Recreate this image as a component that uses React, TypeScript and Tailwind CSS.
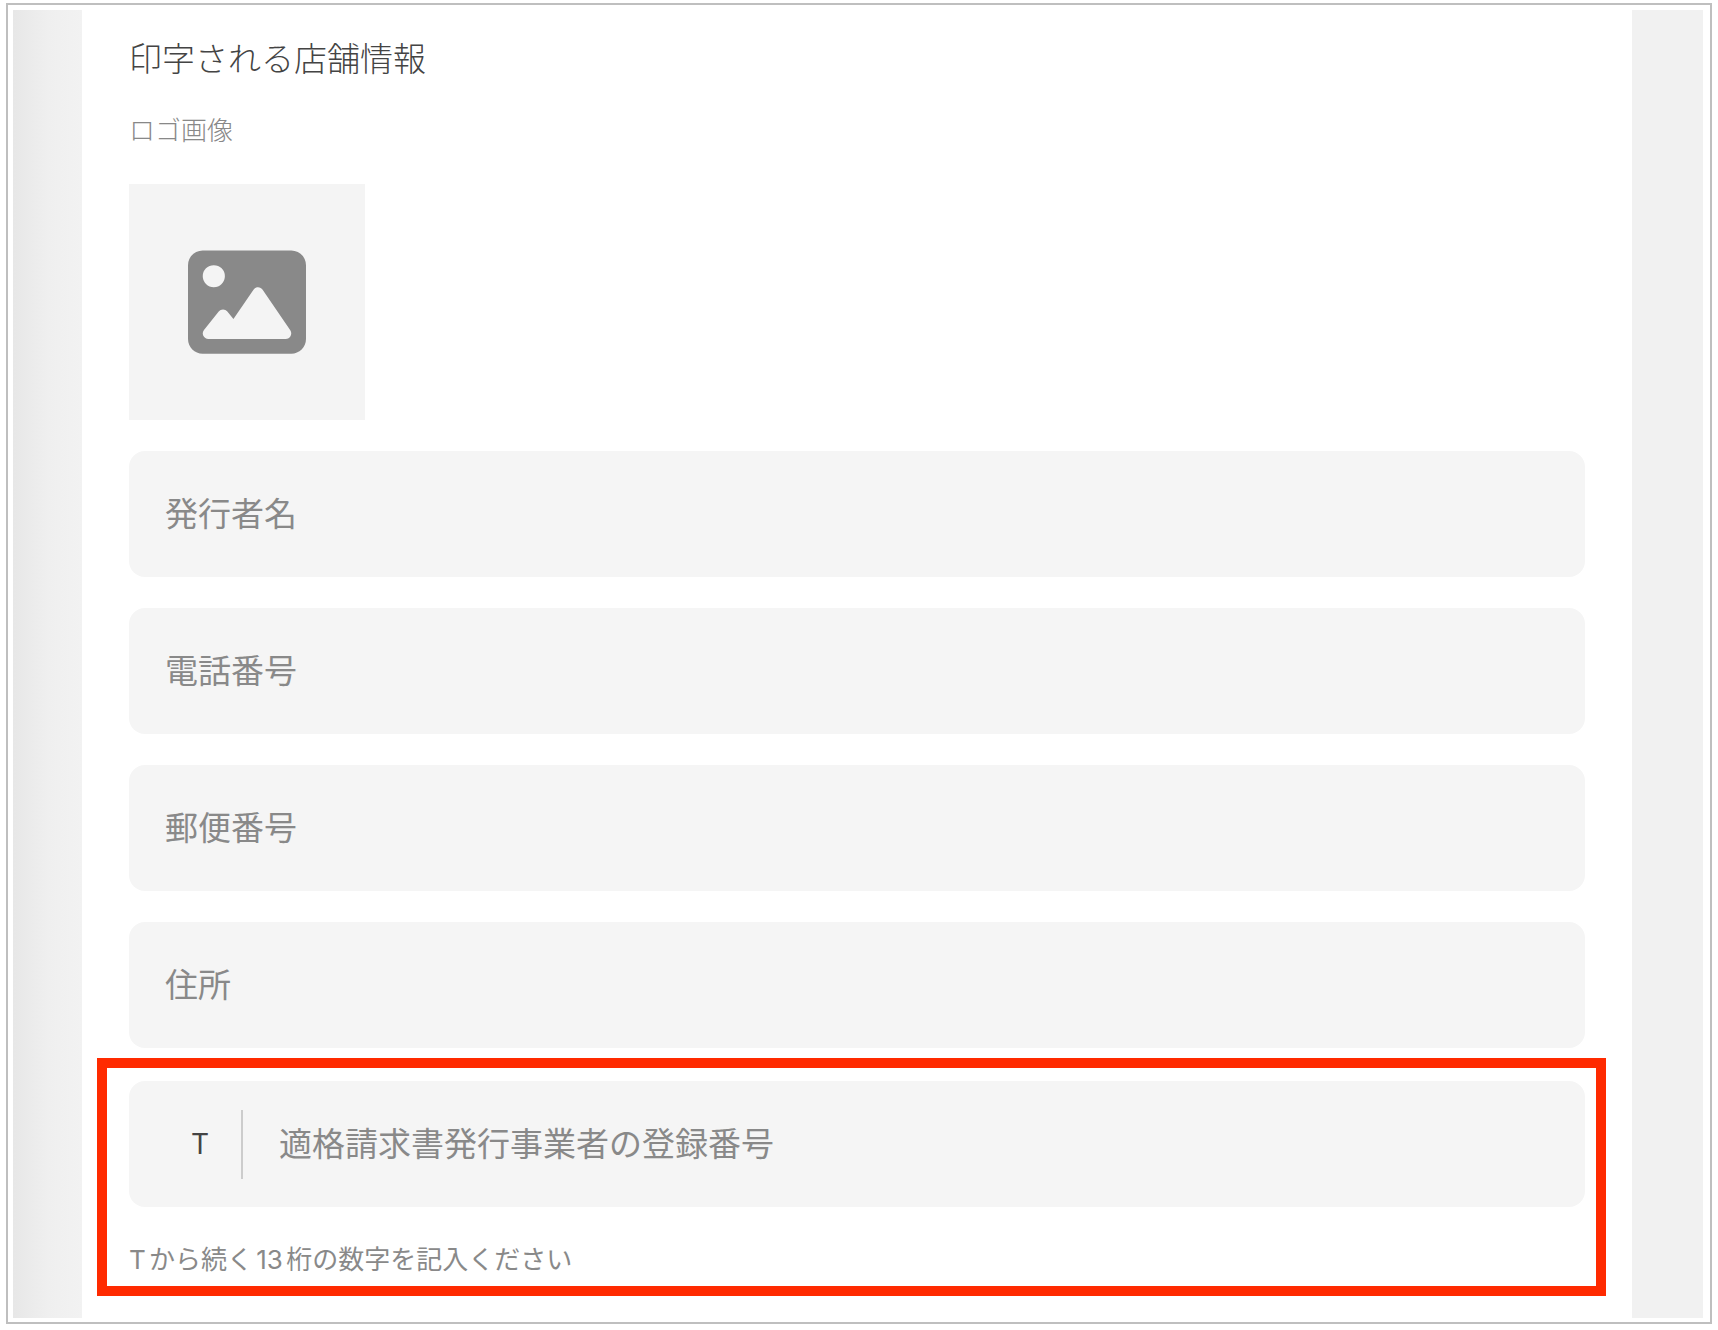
import { FaImage } from "react-icons/fa6";

const fields = [
  { id: "issuer", label: "発行者名", type: "text" },
  { id: "phone", label: "電話番号", type: "tel" },
  { id: "postal", label: "郵便番号", type: "text" },
  { id: "address", label: "住所", type: "text" },
];

export default function App() {
  return (
    <div
      lang="ja"
      className="flex min-h-screen bg-white px-[6px] pt-[3px] pb-[6px] font-['Inter','Noto_Sans_CJK_JP',sans-serif]"
    >
      <div className="flex flex-1 border-2 border-[#bfbfbf] pt-[5px] pr-[7px] pb-1 pl-[5px]">
        <div className="w-[69px] shrink-0 bg-linear-to-r from-[#e7e7e7] via-[#efefef] to-[#f2f2f2]" />
        <main className="min-w-0 flex-1 px-[47px] pt-[25px]">
          <h1 className="text-[33px] leading-[48px] font-light text-[#444444]">印字される店舗情報</h1>
          <p id="logo-label" className="mt-7 text-[26px] leading-10 font-light text-[#888888]">
            ロゴ画像
          </p>
          <button
            type="button"
            aria-labelledby="logo-label"
            className="mt-[33px] flex size-[236px] items-center justify-center bg-[#f4f4f4]"
          >
            <FaImage className="size-[118px] text-[#898989]" />
          </button>
          <form className="mt-[31px]">
            <div className="flex flex-col gap-[31px]">
              {fields.map((f) => (
                <input
                  key={f.id}
                  id={f.id}
                  type={f.type}
                  aria-label={f.label}
                  placeholder={f.label}
                  className="h-[126px] w-full rounded-2xl bg-[#f5f5f5] px-9 text-[33px] text-[#444444] outline-none placeholder:text-[#898989]"
                />
              ))}
            </div>
            <div className="mt-[10px] -mr-[21px] -ml-8 border-[10px] border-[#ff2a00] pt-[13px] pr-[11px] pb-[6px] pl-[22px]">
              <div className="flex h-[126px] items-center rounded-2xl bg-[#f5f5f5]">
                <label
                  htmlFor="registration"
                  className="flex h-[69px] w-[114px] items-center justify-end border-r-2 border-[#cccccc] pr-8 text-[28px] text-[#444444]"
                >
                  T
                </label>
                <input
                  id="registration"
                  type="text"
                  inputMode="numeric"
                  aria-describedby="registration-help"
                  placeholder="適格請求書発行事業者の登録番号"
                  className="h-full min-w-0 flex-1 px-9 text-[33px] text-[#444444] outline-none placeholder:text-[#898989]"
                />
              </div>
              <p
                id="registration-help"
                className="mt-[33px] text-[26px] leading-10 text-[#898989] [text-autospace:normal]"
              >
                Tから続く13桁の数字を記入ください
              </p>
            </div>
          </form>
        </main>
        <div className="w-[71px] shrink-0 bg-[#f1f1f1]" />
      </div>
    </div>
  );
}
